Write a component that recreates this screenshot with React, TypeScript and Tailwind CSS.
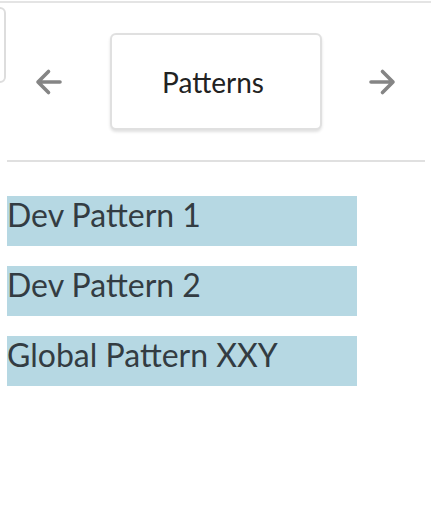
import React from "react";

function Arrow({ dir }: { dir: "left" | "right" }) {
  const d =
    dir === "left"
      ? "M3 14 H25 M3 14 L13.5 3.5 M3 14 L13.5 24.5"
      : "M25 14 H3 M25 14 L14.5 3.5 M25 14 L14.5 24.5";
  return (
    <svg width="28" height="28" viewBox="0 0 28 28" fill="none">
      <path d={d} stroke="#858585" strokeWidth="3.6" strokeLinecap="round" strokeLinejoin="round" />
    </svg>
  );
}

export default function App() {
  const items = ["Dev Pattern 1", "Dev Pattern 2", "Global Pattern XXY"];
  return (
    <div className="w-[434px] h-[514px] bg-white overflow-hidden" style={{ fontFamily: "Lato, 'Open Sans', sans-serif" }}>
      <div className="mt-[1px] h-[2px] w-[431px] bg-[#e4e4e4]" />
      <div className="flex items-start">
        <div className="-ml-[14px] mt-[4px] h-[76px] w-[20px] shrink-0 rounded-[6px] border-2 border-[#dddddd]" />
        <div className="ml-[29px] mt-[30px] flex items-center">
          <Arrow dir="left" />
          <div className="ml-[47px] flex h-[97px] w-[212px] items-center justify-center rounded-[6px] border-2 border-[#e0e0e0] bg-white pr-[6px] text-[28px] text-[#222] shadow-[0_2px_3px_rgba(0,0,0,0.12)]">
            Patterns
          </div>
          <div className="ml-[46px]">
            <Arrow dir="right" />
          </div>
        </div>
      </div>
      <div className="ml-[7px] mt-[30px] h-[2px] w-[418px] bg-[#e0e0e0]" />
      <div className="mt-[34px] flex flex-col gap-[20px] pl-[7px]">
        {items.map((t) => (
          <div key={t} className="h-[50px] w-[350px] bg-[#b6d8e3] text-[32px] leading-[1.2] text-[#333c42]">
            {t}
          </div>
        ))}
      </div>
    </div>
  );
}
